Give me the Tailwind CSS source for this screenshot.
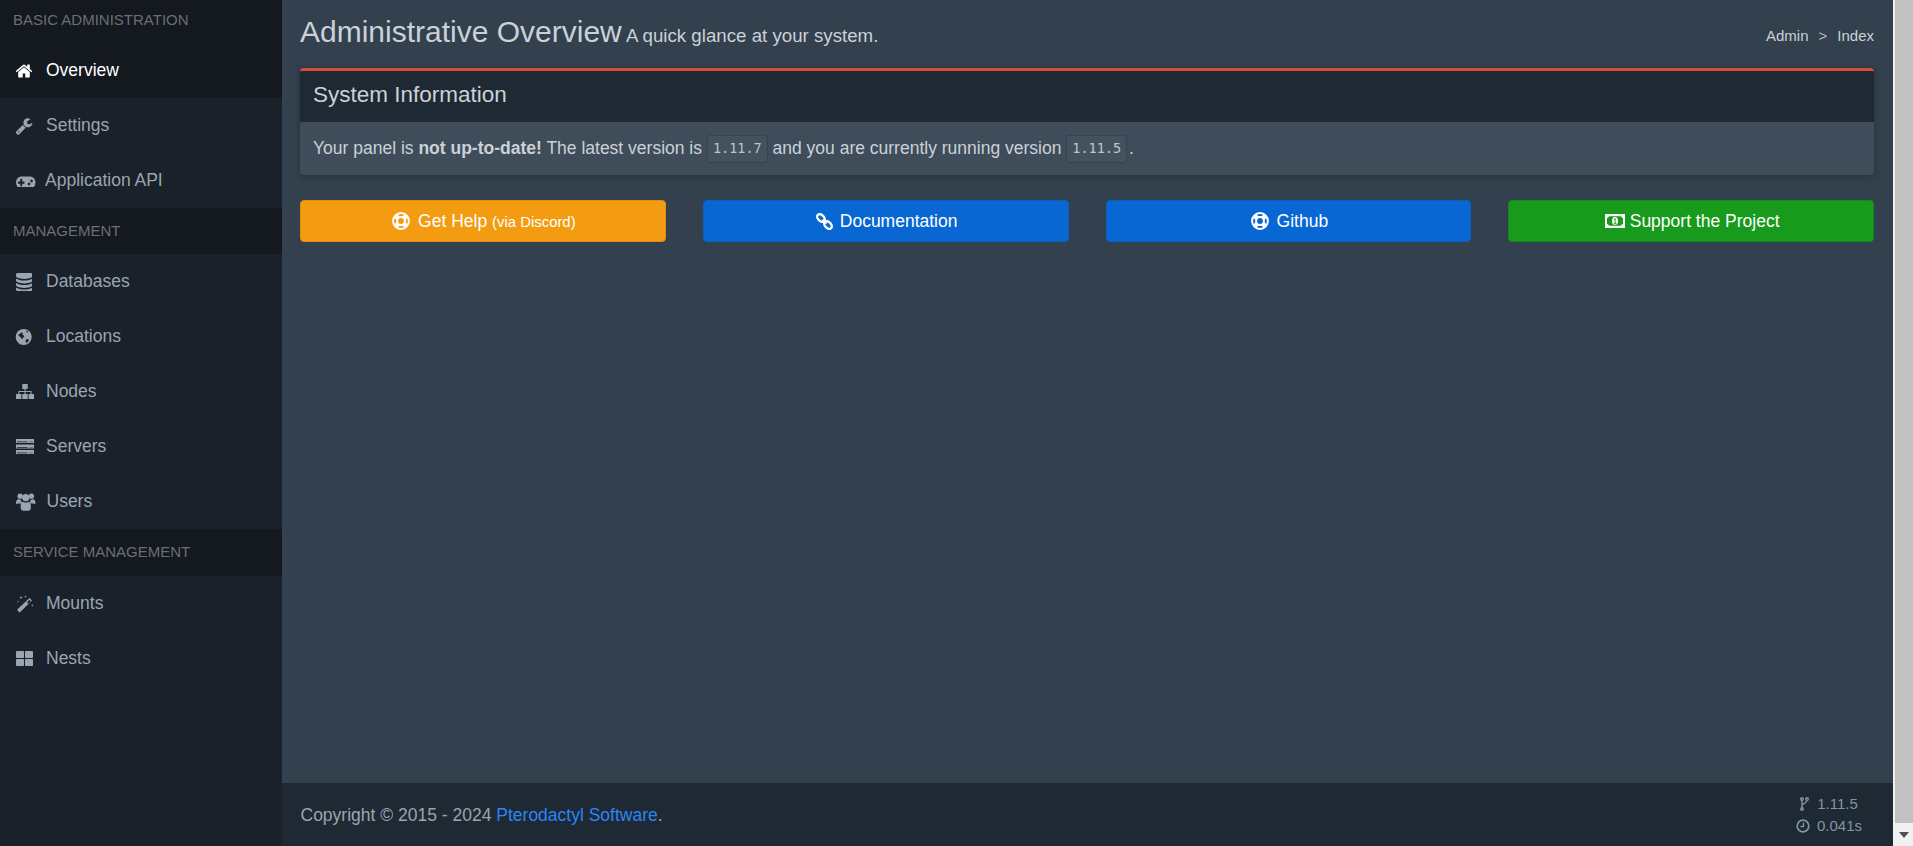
<!DOCTYPE html>
<html lang="en">
<head>
  <meta charset="UTF-8" />
  <title>Administration</title>
  <script src="https://cdn.jsdelivr.net/npm/@tailwindcss/browser@4"></script>
</head>
<body class="h-screen flex overflow-hidden bg-[#33404d] font-['Liberation_Sans',sans-serif] text-[17.5px] text-[#cad1d8]">

  <!-- Sidebar -->
  <aside class="w-[282px] shrink-0 bg-[#1a212a] text-[#9aa5b1] overflow-hidden">
    <div class="h-[43px] bg-[#14181f] pl-[13px] pt-[11px] text-[15px] leading-[18px] text-[#6b6f75]">BASIC ADMINISTRATION</div>
    <a class="h-[55px] flex items-center pl-[15px] bg-[#14181f] text-white">
      <svg class="w-[18px] h-[18px] mr-[13px] fill-current" viewBox="0 0 1792 1792"><path d="M1472 992v480q0 26-19 45t-45 19h-384v-384h-256v384h-384q-26 0-45-19t-19-45v-480q0-1 .5-3t.5-3l575-474 575 474q1 2 1 6zm223-69l-62 74q-8 9-21 11h-3q-13 0-21-7l-692-577-692 577q-12 8-24 7-13-2-21-11l-62-74q-8-10-7-23.5t11-21.5l719-599q32-26 76-26t76 26l244 204v-195q0-14 9-23t23-9h192q14 0 23 9t9 23v408l219 182q10 8 11 21.5t-7 23.5z"/></svg>
      Overview
    </a>
    <a class="h-[55px] flex items-center pl-[15px]">
      <svg class="w-[18px] h-[18px] mr-[13px] fill-current" viewBox="0 0 1792 1792"><path d="M448 1472q0-26-19-45t-45-19-45 19-19 45 19 45 45 19 45-19 19-45zm644-420l-682 682q-37 37-90 37-52 0-91-37l-106-108q-38-36-38-90 0-53 38-91l681-681q39 98 114.5 173.5t173.5 114.5zm634-435q0 39-23 106-47 134-164.5 217.5t-258.5 83.5q-185 0-316.5-131.5t-131.5-316.5 131.5-316.5 316.5-131.5q58 0 121.5 16.5t107.5 46.5q16 11 16 28t-16 28l-293 169v224l193 107q5-3 79-48.5t135.5-81 70.5-35.5q15 0 23.5 10t8.5 25z"/></svg>
      Settings
    </a>
    <a class="h-[55px] flex items-center pl-[16px]">
      <svg class="w-[19.5px] h-[12px] mr-[9.5px] fill-current" viewBox="0 320 1920 1024" preserveAspectRatio="none"><path d="M832 1024v-128q0-14-9-23t-23-9h-192v-192q0-14-9-23t-23-9h-128q-14 0-23 9t-9 23v192h-192q-14 0-23 9t-9 23v128q0 14 9 23t23 9h192v192q0 14 9 23t23 9h128q14 0 23-9t9-23v-192h192q14 0 23-9t9-23zm576 64q0-53-37.5-90.5t-90.5-37.5-90.5 37.5-37.5 90.5 37.5 90.5 90.5 37.5 90.5-37.5 37.5-90.5zm256-256q0-53-37.5-90.5t-90.5-37.5-90.5 37.5-37.5 90.5 37.5 90.5 90.5 37.5 90.5-37.5 37.5-90.5zm256 128q0 212-150 362t-362 150q-192 0-338-128h-220q-146 128-338 128-212 0-362-150t-150-362 150-362 362-150h896q212 0 362 150t150 362z"/></svg>
      Application API
    </a>

    <div class="h-[46px] bg-[#14181f] pl-[13px] flex items-center text-[15px] text-[#6b6f75]">MANAGEMENT</div>
    <a class="h-[55px] flex items-center pl-[15.5px]">
      <svg class="w-[16.5px] h-[18px] mr-[14px] fill-current" viewBox="128 128 1536 1536" preserveAspectRatio="none"><path d="M896 768q237 0 443-43t325-127v170q0 69-103 128t-280 93.5-385 34.5-385-34.5-280-93.5-103-128v-170q119 84 325 127t443 43zm0 768q237 0 443-43t325-127v170q0 69-103 128t-280 93.5-385 34.5-385-34.5-280-93.5-103-128v-170q119 84 325 127t443 43zm0-384q237 0 443-43t325-127v170q0 69-103 128t-280 93.5-385 34.5-385-34.5-280-93.5-103-128v-170q119 84 325 127t443 43zm0-1152q208 0 385 34.5t280 93.5 103 128v128q0 69-103 128t-280 93.5-385 34.5-385-34.5-280-93.5-103-128v-128q0-69 103-128t280-93.5 385-34.5z"/></svg>
      Databases
    </a>
    <a class="h-[55px] flex items-center pl-[15px]">
      <svg class="w-[18px] h-[18px] mr-[13px]" viewBox="0 0 18 18"><circle cx="8.7" cy="9" r="8" fill="currentColor"/><path fill="#1a212a" d="M3 6.500l2-.4 1.500-1.800 1.300.6-.6 1.600 1.700.9.400 1.600-1.400.4-.5 1.700-1.400-.6-.3-1.500-1.500-.7zM10.800 11.500l2.200-.5 1 1.200-1.700 2.300-1.200.4-.5-1.700zM11 2.600l1.500.3.800 1.300-1.400.3z"/></svg>
      Locations
    </a>
    <a class="h-[55px] flex items-center pl-[16px]">
      <svg class="w-[18px] h-[15px] mr-[12px] fill-current" viewBox="0 0 18 15"><rect x="6.300" width="5.400" height="5" rx=".6"/><rect y="10" width="5.400" height="5" rx=".6"/><rect x="6.300" y="10" width="5.400" height="5" rx=".6"/><rect x="12.600" y="10" width="5.400" height="5" rx=".6"/><path d="M8.500 5h1v2h6.100v3h-1V8H9.500v2h-1V8H3.400v2h-1V7h6.100z"/></svg>
      Nodes
    </a>
    <a class="h-[55px] flex items-center pl-[16px]">
      <svg class="w-[18px] h-[15px] mr-[12px] fill-current" viewBox="0 0 18 15"><path fill-rule="evenodd" d="M0 0h18v4H0zm1 2.400v.8h10.500v-.8zm12.500 0v.8h1v-.8zm2 0v.8h1v-.8zM0 5.500h18v4H0zm1 2.400v.8h10.500v-.8zm12.500 0v.8h1v-.8zm2 0v.8h1v-.8zM0 11h18v4H0zm1 2.400v.8h10.500v-.8zm12.500 0v.8h1v-.8zm2 0v.8h1v-.8z"/></svg>
      Servers
    </a>
    <a class="h-[55px] flex items-center pl-[16px]">
      <svg class="w-[19.5px] h-[18px] mr-[11px] fill-current" viewBox="0 0 20 18"><circle cx="4.200" cy="3" r="2.700"/><circle cx="15.800" cy="3" r="2.700"/><circle cx="10" cy="4.500" r="3.800"/><path d="M0 10.500C0 7 1.200 6 3 6.200c.7.500 1.500.6 2.300.6-.3 1.200 0 2.600 1 3.700H2.500Q0 11.500 0 10.500zM20 10.500c0-3.500-1.200-4.500-3-4.300-.7.500-1.500.6-2.300.6.300 1.200 0 2.600-1 3.700h3.800q2.500 1 2.500 0zM5 11q.3-2.500 2-2.300 3 1.800 6 0 1.700-.2 2 2.300.4 2.500.1 4.700-.3 2.300-2.600 2.300H7.500q-2.300 0-2.600-2.300-.3-2.200.1-4.700z"/></svg>
      Users
    </a>

    <div class="h-[47px] bg-[#14181f] pl-[13px] flex items-center text-[15px] text-[#6b6f75]">SERVICE MANAGEMENT</div>
    <a class="h-[55px] flex items-center pl-[16px]">
      <svg class="w-[18px] h-[18px] mr-[12px] fill-current" viewBox="0 0 18 18"><path d="M1.500 14.200L13.500 3l2.500 2.500L4 17.200q-.4.300-.8 0l-1.700-2q-.3-.5 0-1zM11 7.400l1.300 1.300 2.500-2.600-1.300-1.300z"/><path d="M5 1l.5 1.100 1.100.5-1.100.5L5 4.200l-.5-1.100-1.100-.5 1.100-.5zM9.500.300l.4.900.9.400-.9.400-.4.900-.4-.9-.9-.4.900-.4zM16.300 9l.4.900.9.400-.9.400-.4.900-.4-.9-.9-.4.900-.4zM2 5.500l.3.700.7.300-.7.300-.3.700-.3-.7-.7-.3.700-.3z"/></svg>
      Mounts
    </a>
    <a class="h-[55px] flex items-center pl-[16px]">
      <svg class="w-[17px] h-[15px] mr-[13px] fill-current" viewBox="0 0 17 15"><rect width="8" height="7" rx=".8"/><rect x="9" width="8" height="7" rx=".8"/><rect y="8" width="8" height="7" rx=".8"/><rect x="9" y="8" width="8" height="7" rx=".8"/></svg>
      Nests
    </a>
  </aside>

  <!-- Main column -->
  <div class="w-[1611px] shrink-0 flex flex-col">
    <main class="flex-1 pl-[18px] pr-[19px]">
      <div class="h-[68px] flex justify-between">
        <h1 class="pt-[15px] text-[30px] leading-[33px] whitespace-nowrap">Administrative Overview<small class="text-[18.7px] leading-none"> A quick glance at your system.</small></h1>
        <div class="pt-[26px] text-[15px] leading-[20px] flex gap-[10px]">
          <span>Admin</span><span class="text-[#b4bcc4]">&gt;</span><span>Index</span>
        </div>
      </div>

      <section class="rounded-[4px] border-t-[3.75px] border-[#d94c3d] bg-[#3f4d5a] shadow-[0_1px_6px_rgba(0,0,0,0.25)] overflow-hidden">
        <div class="h-[51px] bg-[#1f2933] px-[13px] pb-[4px] flex items-center text-[22.5px]">System Information</div>
        <div class="h-[53px] px-[13px] flex items-center whitespace-pre">Your panel is <strong class="font-bold">not up-to-date!</strong> The latest version is <code class="h-[28px] px-[5px] flex items-center rounded-[3px] border border-[#354250] bg-[#44515e] font-['DejaVu_Sans_Mono',monospace] text-[13.5px] text-[#bcc5ce]">1.11.7</code> and you are currently running version <code class="h-[28px] px-[5px] flex items-center rounded-[3px] border border-[#354250] bg-[#44515e] font-['DejaVu_Sans_Mono',monospace] text-[13.5px] text-[#bcc5ce]">1.11.5</code><span class="ml-[2px]">.</span></div>
      </section>

      <div class="mt-[25px] grid grid-cols-4 gap-x-[37px] text-white">
        <a class="h-[42px] pl-[2px] flex items-center justify-center rounded-[4px] border border-[#e08e0b] bg-[#f39c12]">
          <svg class="w-[18px] h-[18px] mr-[8px]" viewBox="0 0 18 18" fill="none" stroke="currentColor"><circle cx="9" cy="9" r="7.900" stroke-width="2"/><circle cx="9" cy="9" r="3.900" stroke-width="2"/><path stroke-width="4.500" d="M3.800 3.800l2.500 2.500M14.200 3.800l-2.500 2.500M3.800 14.200l2.500-2.500M14.200 14.200l-2.500-2.500"/></svg>
          <span>Get Help <small class="text-[14.9px]">(via Discord)</small></span>
        </a>
        <a class="h-[42px] pl-[2px] flex items-center justify-center rounded-[4px] border border-[#0a5fc0] bg-[#0967d3]">
          <svg class="w-[17px] h-[17px] mr-[7px]" viewBox="0 0 17 17" fill="none" stroke="currentColor" stroke-width="2.300"><ellipse cx="5" cy="5" rx="4.500" ry="3" transform="rotate(45 5 5)"/><ellipse cx="12" cy="12" rx="4.500" ry="3" transform="rotate(45 12 12)"/><path d="M6.500 6.500l4 4"/></svg>
          <span>Documentation</span>
        </a>
        <a class="h-[42px] pl-[2px] flex items-center justify-center rounded-[4px] border border-[#0a5fc0] bg-[#0967d3]">
          <svg class="w-[18px] h-[18px] mr-[8px]" viewBox="0 0 18 18" fill="none" stroke="currentColor"><circle cx="9" cy="9" r="7.900" stroke-width="2"/><circle cx="9" cy="9" r="3.900" stroke-width="2"/><path stroke-width="4.500" d="M3.800 3.800l2.500 2.500M14.200 3.800l-2.500 2.500M3.800 14.200l2.500-2.500M14.200 14.200l-2.500-2.500"/></svg>
          <span>Github</span>
        </a>
        <a class="h-[42px] pl-[2px] flex items-center justify-center rounded-[4px] border border-[#158a19] bg-[#189a1c]">
          <svg class="w-[20px] h-[14px] mr-[5px] fill-current" viewBox="0 3 20 12" preserveAspectRatio="none"><path fill-rule="evenodd" d="M0 3h20v12H0zM2 6.500v5q1.500 0 2 1.500h12q.5-1.500 2-1.500v-5Q16.500 6.500 16 5H4q-.5 1.500-2 1.500zM10 5.500a3 3.500 0 1 1 0 7 3 3.500 0 1 1 0-7zm-1.200 5.400v.8h2.600v-.8h-.8V6.700h-.8l-1 1 .5.600.5-.4v3z"/></svg>
          <span>Support the Project</span>
        </a>
      </div>
    </main>

    <footer class="h-[63px] bg-[#1f2933] pl-[18.5px] pr-[31px] flex items-center justify-between text-[#9aa5b1]">
      <div class="pt-[1px]">Copyright &copy; 2015 - 2024 <a class="text-[#2b85f5]">Pterodactyl Software</a>.</div>
      <div class="flex flex-col items-center text-[15px] leading-[22px] text-[#7f95a8]">
        <div class="flex items-center gap-[8px]">
          <svg class="w-[9px] h-[14px]" viewBox="0 0 9 14" fill="none" stroke="currentColor" stroke-width="1.400"><circle cx="2" cy="2" r="1.300"/><circle cx="7" cy="2" r="1.300"/><circle cx="2" cy="12" r="1.300"/><path d="M2 3.300v7.400M7 3.300C7 6.500 2.500 6 2 8.500"/></svg>
          <span>1.11.5</span>
        </div>
        <div class="flex items-center gap-[7px]">
          <svg class="w-[14px] h-[14px]" viewBox="0 0 14 14" fill="none" stroke="currentColor" stroke-width="1.700"><circle cx="7" cy="7" r="5.800"/><path stroke-width="1.300" d="M7.500 3.500v4h-3"/></svg>
          <span>0.041s</span>
        </div>
      </div>
    </footer>
  </div>

  <!-- Page scrollbar, the page sits scrolled to the bottom -->
  <div class="w-[20px] shrink-0 bg-[#f1f1f1] pl-[2px] flex flex-col">
    <div class="flex-1 bg-[#c1c1c1]"></div>
    <div class="h-[23px] flex items-center justify-center text-[#505050]">
      <svg class="w-[10px] h-[6px] fill-current" viewBox="0 0 10 6"><path d="M0 0h10L5 6z"/></svg>
    </div>
  </div>
</body>
</html>
